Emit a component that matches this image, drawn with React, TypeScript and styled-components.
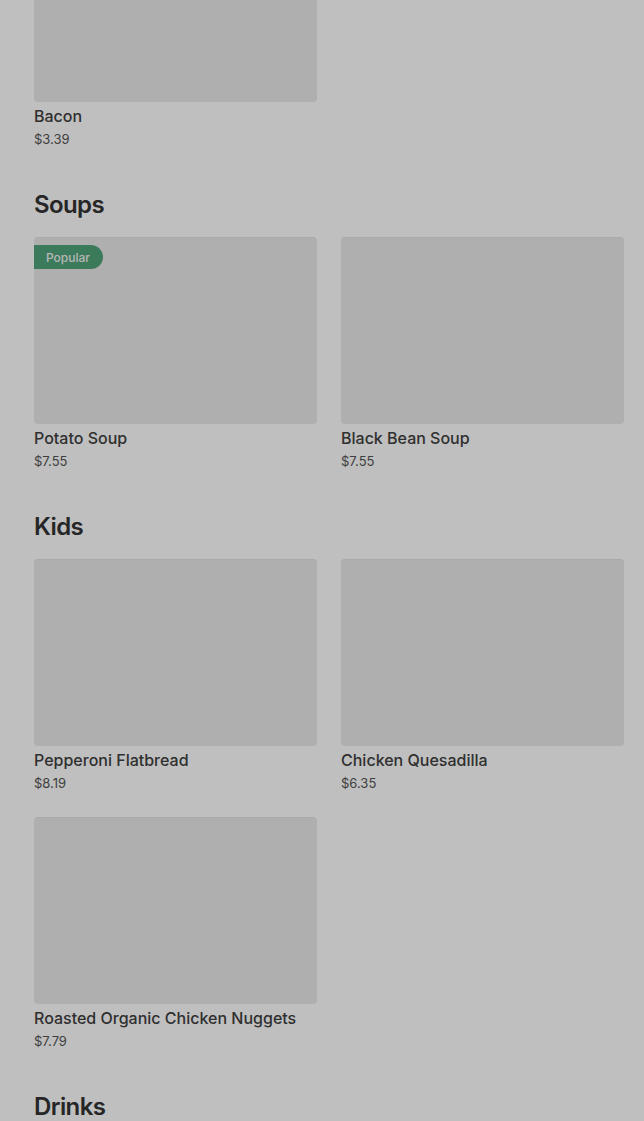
import styled, { createGlobalStyle } from "styled-components";

const GlobalStyle = createGlobalStyle`
  html, body {
    margin: 0;
    padding: 0;
    background: #ffffff;
    font-family: Inter, "Noto Sans", "Liberation Sans", sans-serif;
    color: #191919;
    overflow: hidden;
  }
  * { box-sizing: border-box; }
`;

const Viewport = styled.div`
  height: 1121px;
  overflow: hidden;
  position: relative;
`;

const Menu = styled.main`
  margin-top: -85px;
  padding: 0 20px 0 34px;
  display: flex;
  flex-direction: column;
  gap: 40px;
`;

const Section = styled.section`
  display: flex;
  flex-direction: column;
  gap: 16px;
`;

const Heading = styled.h2`
  margin: 0;
  font-size: 24px;
  line-height: 32px;
  font-weight: 600;
  letter-spacing: -0.6px;
  color: #333333;
`;

const Grid = styled.div`
  display: grid;
  grid-template-columns: 1fr 1fr;
  column-gap: 24px;
  row-gap: 24px;
`;

const Card = styled.article`
  display: flex;
  flex-direction: column;
`;

const Thumb = styled.div`
  position: relative;
  height: 187px;
  border-radius: 4px;
  background: #eaeaea;
  box-shadow: inset 0 1px 0 rgba(0, 0, 0, 0.03);
`;

const Badge = styled.span`
  position: absolute;
  top: 8px;
  left: 0;
  height: 24px;
  padding: 0 13px 0 12px;
  display: flex;
  align-items: center;
  border-radius: 0 12px 12px 0;
  background: #4fa47a;
  color: #f2f2f2;
  font-size: 12px;
  font-weight: 500;
`;

const Title = styled.h3`
  margin: 2px 0 0;
  font-size: 16px;
  line-height: 24px;
  font-weight: 500;
  color: #404040;
`;

const Price = styled.span`
  margin-top: 1px;
  font-size: 13px;
  line-height: 20px;
  color: #555555;
`;

const Backdrop = styled.div`
  position: absolute;
  inset: 0;
  background: rgba(0, 0, 0, 0.25);
  pointer-events: none;
`;

type Item = { name: string; price: string; popular?: boolean };

const sections: { title?: string; items: Item[] }[] = [
  { items: [{ name: "Bacon", price: "$3.39" }] },
  {
    title: "Soups",
    items: [
      { name: "Potato Soup", price: "$7.55", popular: true },
      { name: "Black Bean Soup", price: "$7.55" },
    ],
  },
  {
    title: "Kids",
    items: [
      { name: "Pepperoni Flatbread", price: "$8.19" },
      { name: "Chicken Quesadilla", price: "$6.35" },
      { name: "Roasted Organic Chicken Nuggets", price: "$7.79" },
    ],
  },
  { title: "Drinks", items: [{ name: "Lemonade", price: "$3.19" }] },
];

export default function App() {
  return (
    <>
      <GlobalStyle />
      <Viewport>
        <Menu>
          {sections.map((section, i) => (
            <Section key={i}>
              {section.title && <Heading>{section.title}</Heading>}
              <Grid>
                {section.items.map((item) => (
                  <Card key={item.name}>
                    <Thumb>{item.popular && <Badge>Popular</Badge>}</Thumb>
                    <Title>{item.name}</Title>
                    <Price>{item.price}</Price>
                  </Card>
                ))}
              </Grid>
            </Section>
          ))}
        </Menu>
        <Backdrop />
      </Viewport>
    </>
  );
}
